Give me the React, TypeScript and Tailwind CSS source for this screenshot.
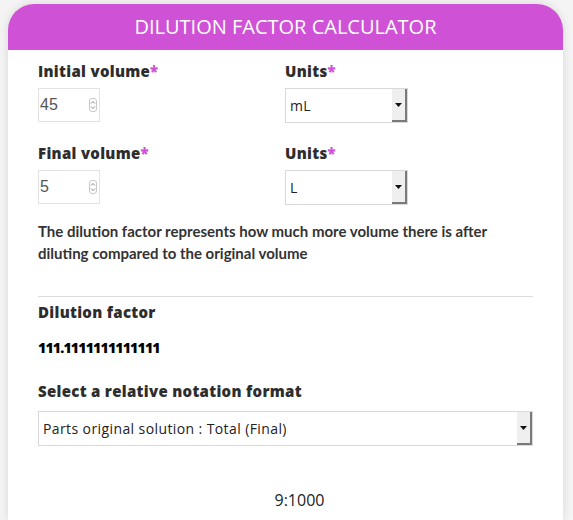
import React from "react";

const poppins = { fontFamily: "'Open Sans', 'Noto Sans', sans-serif" };

function Spinner() {
  return (
    <div className="flex h-[14px] w-[8px] flex-col items-center justify-center rounded-[3px] border border-[#c8c8c8] bg-white">
      <svg width="6" height="10" viewBox="0 0 6 10">
        <path d="M1 3.5 L3 1.5 L5 3.5" fill="none" stroke="#777" strokeWidth="0.9" />
        <path d="M1 6.5 L3 8.5 L5 6.5" fill="none" stroke="#777" strokeWidth="0.9" />
      </svg>
    </div>
  );
}

function NumInput({ value }: { value: string }) {
  return (
    <div className="flex h-[34px] w-[62px] items-center justify-between border border-[#e3e3e3] bg-white pl-[1px] pr-[2px]">
      <span className="text-[16px] text-[#555]" style={{ fontFamily: "'Liberation Sans', Arial, sans-serif" }}>
        {value}
      </span>
      <Spinner />
    </div>
  );
}

function Select({ value, width }: { value: string; width: string }) {
  return (
    <div className={`flex h-[35px] items-stretch border border-[#d9d9d9] bg-white ${width}`}>
      <div className="flex flex-1 items-center pl-[4px] text-[14px] tracking-[0.4px] text-[#222]" style={poppins}>
        {value}
      </div>
      <div className="flex w-[15px] items-center justify-center border-b-2 border-r-2 border-b-[#7a7a7a] border-r-[#7a7a7a] bg-[#efefef]">
        <svg width="7" height="4" viewBox="0 0 7 4">
          <path d="M0 0 H7 L3.5 4 Z" fill="#111" />
        </svg>
      </div>
    </div>
  );
}

function Label({ children }: { children: React.ReactNode }) {
  return (
    <div className="text-[15px] font-extrabold leading-[18px] tracking-[0.3px] text-[#2d2d2d]" style={poppins}>
      {children}
      <span className="text-[#cf52d6]">*</span>
    </div>
  );
}

export default function App() {
  return (
    <div className="min-h-[520px] w-[573px] overflow-hidden bg-[#f4f4f4] px-[8px] pt-[4px]">
      <div className="min-h-[516px] w-[555px] rounded-t-[26px] bg-white shadow-[0_0_10px_rgba(0,0,0,0.12)]">
        <div
          className="flex h-[46px] items-center justify-center rounded-t-[26px] bg-[#cf52d6] text-[20px] font-medium text-white"
          style={poppins}
        >
          DILUTION FACTOR CALCULATOR
        </div>
        <div className="px-[30px] pt-[12px]">
          <div className="grid grid-cols-[247px_1fr] gap-y-[21px]">
            <div className="flex flex-col gap-[8px]">
              <Label>Initial volume</Label>
              <NumInput value="45" />
            </div>
            <div className="flex flex-col gap-[8px]">
              <Label>Units</Label>
              <Select value="mL" width="w-[123px]" />
            </div>
            <div className="flex flex-col gap-[8px]">
              <Label>Final volume</Label>
              <NumInput value="5" />
            </div>
            <div className="flex flex-col gap-[8px]">
              <Label>Units</Label>
              <Select value="L" width="w-[123px]" />
            </div>
          </div>
          <p
            className="mt-[15px] w-[470px] text-[15px] font-bold leading-[22px] text-[#333]"
            style={{ fontFamily: "Lato, sans-serif" }}
          >
            The dilution factor represents how much more volume there is after diluting compared to the original volume
          </p>
          <div className="mt-[32px] h-px w-[495px] bg-[#dcdcdc]" />
          <div className="mt-[6px] text-[15px] font-extrabold leading-[18px] tracking-[0.3px] text-[#2d2d2d]" style={poppins}>
            Dilution factor
          </div>
          <div className="mt-[18px] text-[14px] font-extrabold leading-[18px] tracking-[-0.8px] text-black" style={poppins}>
            111.1111111111111
          </div>
          <div className="mt-[25px] text-[15px] font-extrabold leading-[18px] tracking-[0.3px] text-[#2d2d2d]" style={poppins}>
            Select a relative notation format
          </div>
          <div className="mt-[11px]">
            <Select value="Parts original solution : Total (Final)" width="w-[495px]" />
          </div>
          <div className="mt-[42px] w-[523px] text-center text-[16px] text-[#222]" style={poppins}>
            9:1000
          </div>
        </div>
      </div>
    </div>
  );
}
